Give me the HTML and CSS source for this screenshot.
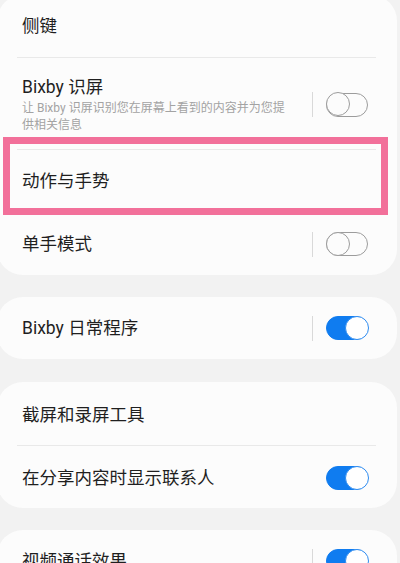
FILE: index.html
```html
<!DOCTYPE html>
<html lang="zh-CN">
<head>
    <meta charset="UTF-8">
    <meta name="viewport" content="width=device-width, initial-scale=1.0">
    <title>高级功能</title>
    <link rel="stylesheet" href="styles.css">
</head>
<body>
    <div class="settings">
        <div class="card first">
            <div class="row">
                <span class="title">侧键</span>
            </div>
            <div class="row tall">
                <div class="text">
                    <span class="title">Bixby 识屏</span>
                    <span class="sub">让 Bixby 识屏识别您在屏幕上看到的内容并为您提供相关信息</span>
                </div>
                <span class="bar"></span>
                <span class="switch"></span>
            </div>
            <div class="row marked">
                <span class="title">动作与手势</span>
                <span class="highlight"></span>
            </div>
            <div class="row">
                <span class="title">单手模式</span>
                <span class="bar"></span>
                <span class="switch"></span>
            </div>
        </div>

        <div class="card">
            <div class="row">
                <span class="title">Bixby 日常程序</span>
                <span class="bar"></span>
                <span class="switch on"></span>
            </div>
        </div>

        <div class="card tools">
            <div class="row">
                <span class="title">截屏和录屏工具</span>
            </div>
            <div class="row">
                <span class="title">在分享内容时显示联系人</span>
                <span class="switch on"></span>
            </div>
        </div>

        <div class="card">
            <div class="row">
                <span class="title">视频通话效果</span>
                <span class="bar"></span>
                <span class="switch on"></span>
            </div>
        </div>
    </div>
</body>
</html>
```

FILE: styles.css
```css
body {
    margin: 0;
    background-color: #f2f2f2;
    font-family: Roboto, "Noto Sans CJK SC", sans-serif;
    color: #1f1f1f;
    overflow: hidden;
}
.settings {
    display: flex;
    flex-direction: column;
    gap: 22px;
    width: 400px;
    margin: -5px 0 0 -3px;
}
.card {
    background-color: #fcfcfc;
    border-radius: 26px;
}
.row {
    position: relative;
    display: flex;
    align-items: center;
    min-height: 62px;
    padding: 0 29px 0 25px;
    box-sizing: border-box;
}
.row + .row::before {
    content: '';
    position: absolute;
    top: -1px;
    left: 20px;
    right: 21px;
    height: 1px;
    background-color: #e9e9e9;
}
.row + .row {
    margin-top: 1px;
}
.row.tall {
    min-height: 91px;
    padding-top: 2px;
}
.tools {
    margin-top: 1px;
}
.tools .row:first-child {
    min-height: 63px;
    padding-top: 3px;
}
.tools .row + .row {
    padding-top: 2px;
}
.text {
    flex: 1;
    display: flex;
    flex-direction: column;
    padding-right: 16px;
}
.title {
    flex: 1;
    font-size: 17.5px;
    line-height: 24px;
}
.sub {
    font-size: 12px;
    line-height: 17px;
    color: #a3a3a3;
    margin-top: 1px;
}
.bar {
    width: 1px;
    height: 25px;
    background-color: #d9d9d9;
    margin-right: 13px;
}
.switch {
    position: relative;
    width: 42px;
    height: 24px;
    border: 1.5px solid #9c9c9c;
    border-radius: 12px;
    box-sizing: border-box;
}
.switch::after {
    content: '';
    position: absolute;
    top: -1.5px;
    left: -1.5px;
    width: 24px;
    height: 24px;
    border: 1.5px solid #9c9c9c;
    border-radius: 50%;
    background-color: #fcfcfc;
    box-sizing: border-box;
}
.switch.on {
    background-color: #0f7cf0;
    border-color: #0f7cf0;
}
.switch.on::after {
    left: auto;
    right: -1.5px;
    border-color: #2f8cf0;
    background-color: #fff;
}
.highlight {
    position: absolute;
    z-index: 1;
    top: -13px;
    left: 6px;
    right: 9px;
    bottom: -3px;
    border: 7px solid #f2709a;
    pointer-events: none;
}
```
